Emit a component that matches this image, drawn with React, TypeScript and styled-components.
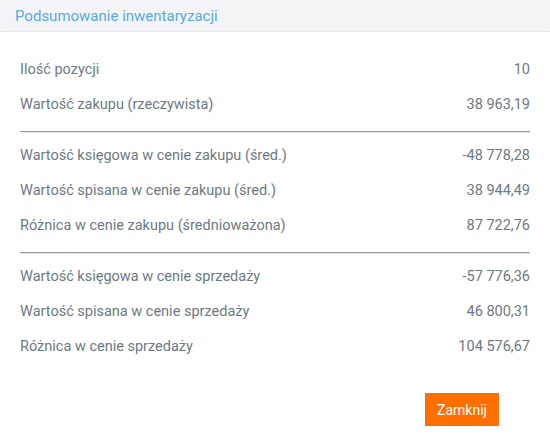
import React from "react";
import styled, { createGlobalStyle } from "styled-components";

const Global = createGlobalStyle`
  html, body { margin: 0; padding: 0; background: #ffffff; }
  body { font-family: Roboto, "Open Sans", sans-serif; }
`;

const Dialog = styled.div`
  width: 550px;
  height: 446px;
  display: flex;
  flex-direction: column;
  background: #ffffff;
`;

const Header = styled.div`
  height: 32px;
  box-sizing: border-box;
  padding: 0 15px;
  display: flex;
  align-items: center;
  background: #f2f4f6;
  border-bottom: 1px dotted #dfe3e6;
`;

const Title = styled.h1`
  margin: 0;
  font-size: 15px;
  font-weight: 400;
  color: #5aaae4;
`;

const Body = styled.div`
  padding: 20px 20px 0 20px;
  display: flex;
  flex-direction: column;
`;

const Row = styled.div`
  height: 35px;
  display: flex;
  align-items: center;
  justify-content: space-between;
  font-size: 14.5px;
  color: #6d7985;
`;

const Divider = styled.hr`
  margin: 9px 0 5px 0;
  border: none;
  border-top: 1px solid #9a9a9a;
  border-bottom: 1px solid #e6e6e6;
  height: 0;
`;

const Footer = styled.div`
  margin-top: auto;
  display: flex;
  justify-content: flex-end;
  padding: 0 51px 20px 0;
`;

const Button = styled.button`
  width: 74px;
  height: 33px;
  border: none;
  background: #ff6f00;
  color: #ffffff;
  font-family: inherit;
  font-size: 14px;
  cursor: pointer;
`;

type Item = { label: string; value: string };

const groups: Item[][] = [
  [
    { label: "Ilość pozycji", value: "10" },
    { label: "Wartość zakupu (rzeczywista)", value: "38 963,19" },
  ],
  [
    { label: "Wartość księgowa w cenie zakupu (śred.)", value: "-48 778,28" },
    { label: "Wartość spisana w cenie zakupu (śred.)", value: "38 944,49" },
    { label: "Różnica w cenie zakupu (średnioważona)", value: "87 722,76" },
  ],
  [
    { label: "Wartość księgowa w cenie sprzedaży", value: "-57 776,36" },
    { label: "Wartość spisana w cenie sprzedaży", value: "46 800,31" },
    { label: "Różnica w cenie sprzedaży", value: "104 576,67" },
  ],
];

export default function App() {
  return (
    <>
      <Global />
      <Dialog>
        <Header>
          <Title>Podsumowanie inwentaryzacji</Title>
        </Header>
        <Body>
          {groups.map((g, gi) => (
            <React.Fragment key={gi}>
              {gi > 0 && <Divider />}
              {g.map((it) => (
                <Row key={it.label}>
                  <span>{it.label}</span>
                  <span>{it.value}</span>
                </Row>
              ))}
            </React.Fragment>
          ))}
        </Body>
        <Footer>
          <Button>Zamknij</Button>
        </Footer>
      </Dialog>
    </>
  );
}
